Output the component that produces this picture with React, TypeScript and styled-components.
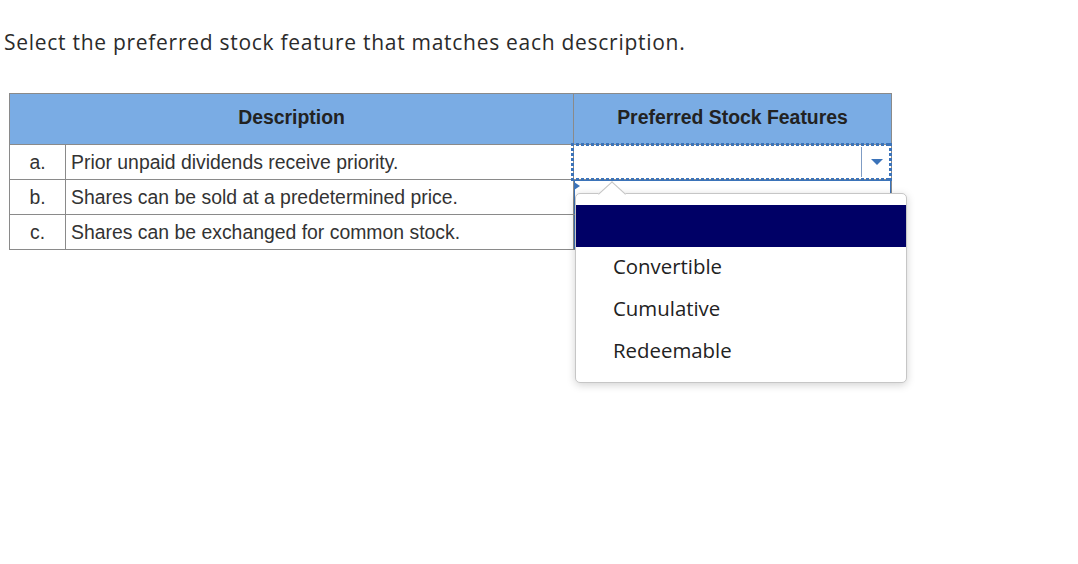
import React from "react";
import styled, { createGlobalStyle } from "styled-components";

const Global = createGlobalStyle`
  html, body, #root { margin: 0; padding: 0; background: #fff; min-height: 100%; }
  html, body { height: 100%; }
  body { font-family: "Liberation Sans", Arial, sans-serif; }
`;

const Page = styled.div`
  min-height: 564px;
  box-sizing: border-box;
  padding: 29px 0 0 4px;
`;

const Title = styled.h1`
  margin: 0 0 37px 0;
  font-family: "Open Sans", "Liberation Sans", sans-serif;
  font-weight: 400;
  font-size: 21px;
  letter-spacing: 0.72px;
  line-height: 27px;
  color: #2b2b2b;
`;

const TableWrap = styled.div`
  position: relative;
  margin-left: 5px;
  width: 882px;
`;

const Table = styled.table`
  border-collapse: collapse;
  table-layout: fixed;
  width: 882px;
  font-family: "Liberation Sans", Arial, sans-serif;
  font-size: 19.4px;
`;

const Th = styled.th`
  background: #7aace4;
  border: 1px solid #8a8a8a;
  height: 51px;
  padding: 0 0 3px;
  box-sizing: border-box;
  font-weight: 700;
  color: #222;
  text-align: center;
  vertical-align: middle;
`;

const Td = styled.td<{ $center?: boolean }>`
  border: 1px solid #8a8a8a;
  height: 34px;
  padding: 0 5px;
  color: #333;
  text-align: ${(p) => (p.$center ? "center" : "left")};
  vertical-align: middle;
  white-space: nowrap;
`;

const SelectCell = styled.td`
  border: 1px solid #8a8a8a;
  height: 34px;
  padding: 0;
  vertical-align: top;
`;

const dotsH = "repeating-linear-gradient(90deg, #3b73b9 0 3px, transparent 3px 5px)";
const dotsV = "repeating-linear-gradient(180deg, #3b73b9 0 3px, transparent 3px 5px)";

const FocusedSelect = styled.div`
  position: relative;
  display: flex;
  height: 34px;
  background: #fff;
  &::after {
    content: "";
    position: absolute;
    inset: -2px -1px -2px -3px;
    background:
      ${dotsH} left top / 100% 3px no-repeat,
      ${dotsH} left bottom / 100% 3px no-repeat,
      ${dotsV} left top / 3px 100% no-repeat,
      ${dotsV} right top / 3px 100% no-repeat;
    pointer-events: none;
  }
`;

const SelectValue = styled.div`
  flex: 1;
`;

const ArrowBox = styled.div`
  width: 29px;
  border-left: 1px solid #7f9cc4;
  margin: 2px 0;
  display: flex;
  align-items: center;
  justify-content: center;
`;

const ArrowDown = styled.span`
  width: 0;
  height: 0;
  margin-left: 1px;
  border-left: 6px solid transparent;
  border-right: 6px solid transparent;
  border-top: 6px solid #3b73b9;
`;

const PlainSelect = styled.div`
  position: relative;
  height: 34px;
  box-sizing: border-box;
  border: 1px solid #3b73b9;
  background: #fff;
`;

const Flag = styled.span`
  position: absolute;
  left: -1px;
  top: 1px;
  width: 0;
  height: 0;
  border-top: 4px solid transparent;
  border-bottom: 4px solid transparent;
  border-left: 6px solid #3b73b9;
`;

const Popup = styled.div`
  position: absolute;
  left: 566px;
  top: 100px;
  width: 332px;
  box-sizing: border-box;
  padding: 11px 0 9px;
  background: #fff;
  border: 1px solid #c6c6c6;
  border-radius: 5px;
  box-shadow: 0 2px 8px rgba(0, 0, 0, 0.18);
  font-family: "Open Sans", "Noto Sans", sans-serif;
  font-size: 20.4px;
  color: #222;
  z-index: 2;
`;

const Caret = styled.span`
  position: absolute;
  left: 27px;
  top: -9px;
  width: 17px;
  height: 17px;
  background: #fff;
  border-left: 1px solid #c6c6c6;
  border-top: 1px solid #c6c6c6;
  transform: scaleX(1.1) rotate(45deg);
`;

const Option = styled.div<{ $active?: boolean }>`
  position: relative;
  height: 42px;
  display: flex;
  align-items: center;
  padding-left: 37px;
  padding-bottom: 5px;
  box-sizing: border-box;
  background: ${(p) => (p.$active ? "#000066" : "transparent")};
  color: ${(p) => (p.$active ? "#fff" : "#222")};
`;

const rows = [
  { k: "a.", t: "Prior unpaid dividends receive priority." },
  { k: "b.", t: "Shares can be sold at a predetermined price." },
  { k: "c.", t: "Shares can be exchanged for common stock." },
];

export default function App() {
  return (
    <>
      <Global />
      <Page>
        <Title>Select the preferred stock feature that matches each description.</Title>
        <TableWrap>
          <Table>
            <colgroup>
              <col style={{ width: 56 }} />
              <col style={{ width: 508 }} />
              <col style={{ width: 318 }} />
            </colgroup>
            <thead>
              <tr>
                <Th colSpan={2}>Description</Th>
                <Th>Preferred Stock Features</Th>
              </tr>
            </thead>
            <tbody>
              {rows.map((r, i) => (
                <tr key={r.k}>
                  <Td $center>{r.k}</Td>
                  <Td>{r.t}</Td>
                  <SelectCell>
                    {i === 0 ? (
                      <FocusedSelect>
                        <SelectValue />
                        <ArrowBox>
                          <ArrowDown />
                        </ArrowBox>
                      </FocusedSelect>
                    ) : (
                      <PlainSelect>{i === 1 && <Flag />}</PlainSelect>
                    )}
                  </SelectCell>
                </tr>
              ))}
            </tbody>
          </Table>
          <Popup>
            <Caret />
            <Option $active>{"\u00a0"}</Option>
            <Option>Convertible</Option>
            <Option>Cumulative</Option>
            <Option>Redeemable</Option>
          </Popup>
        </TableWrap>
      </Page>
    </>
  );
}
